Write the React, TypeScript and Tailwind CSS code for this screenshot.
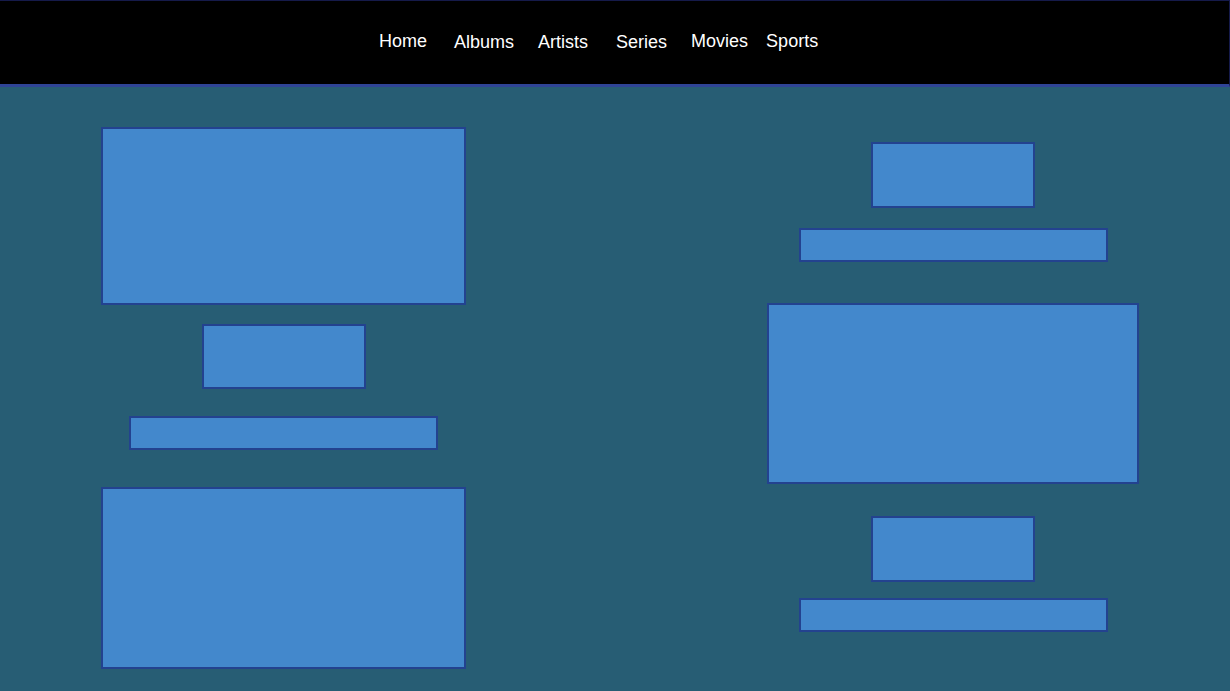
import React from 'react';

const box = 'border-2 border-[#23428f] bg-[#4388cc]';

const navItems = [
  { label: 'Home', cls: 'mt-0' },
  { label: 'Albums', cls: 'ml-[27px] mt-[1px]' },
  { label: 'Artists', cls: 'ml-[24px] mt-[1px]' },
  { label: 'Series', cls: 'ml-[28px] mt-[1px]' },
  { label: 'Movies', cls: 'ml-[24px] mt-0' },
  { label: 'Sports', cls: 'ml-[18px] mt-0' },
];

export default function App() {
  return (
    <div
      className="min-h-screen bg-[#275d74] flex flex-col"
      style={{ fontFamily: '"Liberation Sans", Arial, sans-serif' }}
    >
      {/* Navigation bar */}
      <header className="h-[87px] bg-black border-t border-r border-[#151a4a] border-b-[3px] border-b-[#2f4496]">
        <nav className="flex items-start pl-[379px] pt-[30px]">
          {navItems.map((item) => (
            <a key={item.label} className={`text-white text-[18px] leading-[21px] ${item.cls}`}>
              {item.label}
            </a>
          ))}
        </nav>
      </header>

      {/* Content */}
      <main className="flex-1 flex items-start pl-[101px]">
        <div className="w-[365px] flex flex-col items-center pt-[40px]">
          <div className={`${box} w-[365px] h-[178px]`} />
          <div className={`${box} w-[164px] h-[65px] mt-[19px]`} />
          <div className={`${box} w-[309px] h-[34px] mt-[27px]`} />
          <div className={`${box} w-[365px] h-[182px] mt-[37px]`} />
        </div>
        <div className="w-[372px] ml-[301px] flex flex-col items-center pt-[55px]">
          <div className={`${box} w-[164px] h-[66px]`} />
          <div className={`${box} w-[309px] h-[34px] mt-[20px]`} />
          <div className={`${box} w-[372px] h-[181px] mt-[41px]`} />
          <div className={`${box} w-[164px] h-[66px] mt-[32px]`} />
          <div className={`${box} w-[309px] h-[34px] mt-[16px]`} />
        </div>
      </main>
    </div>
  );
}
